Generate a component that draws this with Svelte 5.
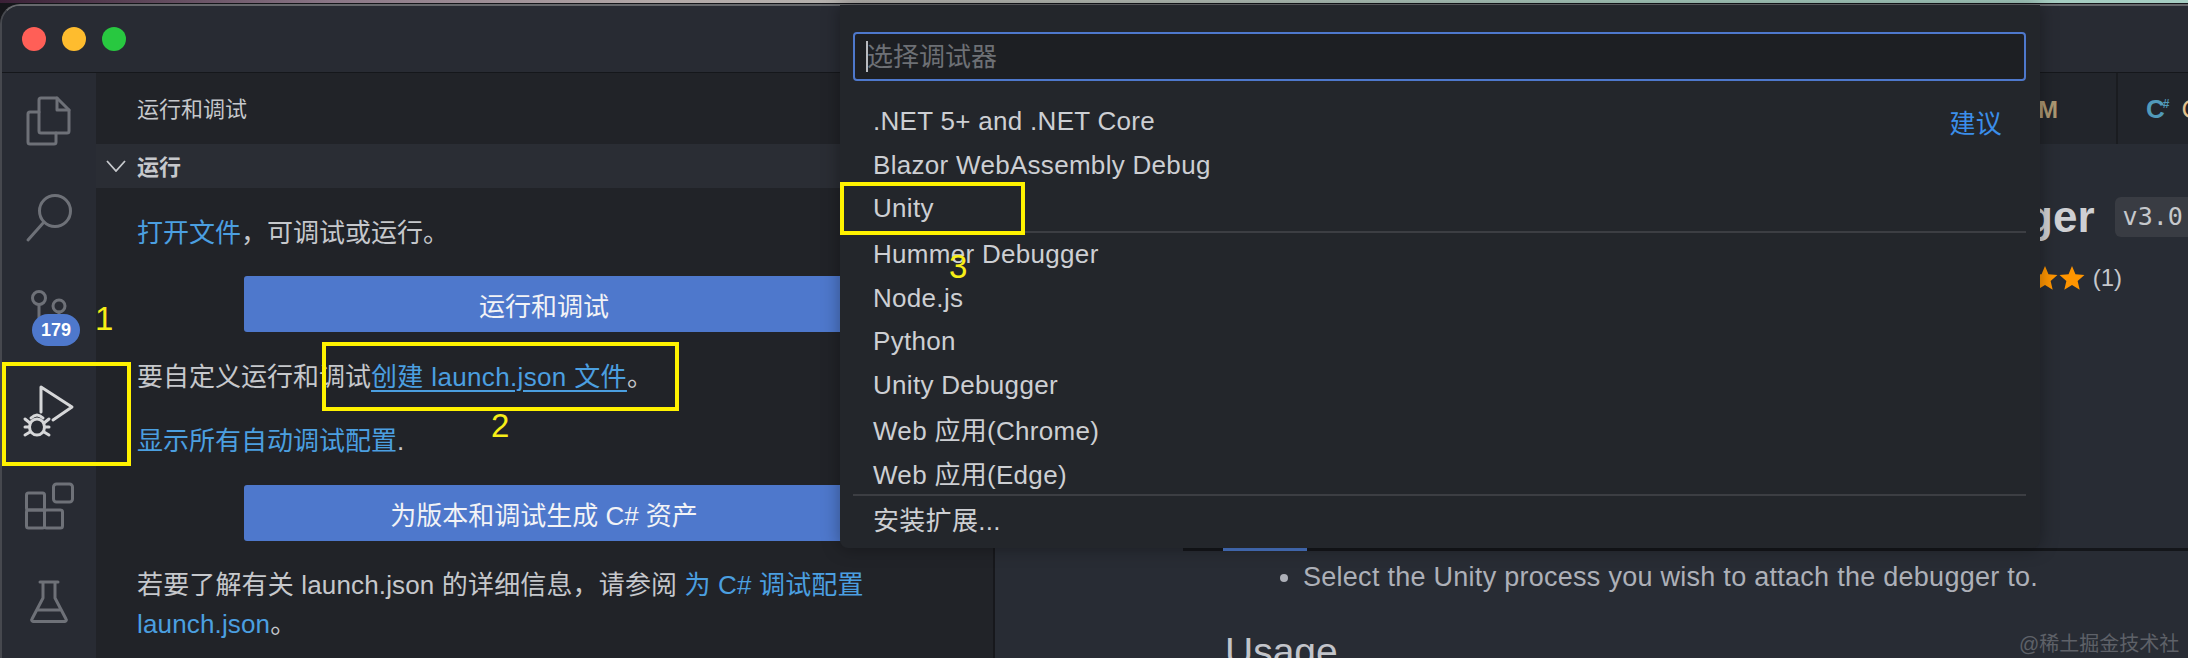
<script lang="ts">
	// Quick pick entries, "sep" marks a divider drawn above the row
	const debuggers = [
		{ label: '.NET 5+ and .NET Core', hint: '建议' },
		{ label: 'Blazor WebAssembly Debug' },
		{ label: 'Unity' },
		{ label: 'Hummer Debugger', sep: true },
		{ label: 'Node.js' },
		{ label: 'Python' },
		{ label: 'Unity Debugger' },
		{ label: 'Web 应用(Chrome)' },
		{ label: 'Web 应用(Edge)' },
		{ label: '安装扩展...', sep: true }
	];

	const stars = [0, 1, 2, 3, 4];
</script>

<div class="screen">
	<div class="desktop-strip"></div>

	<div class="window">
		<header class="titlebar">
			<span class="light red"></span>
			<span class="light yellow"></span>
			<span class="light green"></span>
		</header>

		<div class="workbench">
			<nav class="activity">
				<div class="act-item">
					<svg viewBox="0 0 48 48" class="icon">
						<path d="M14 3a2 2 0 0 1 2-2H32L44 13V34a2 2 0 0 1-2 2H16a2 2 0 0 1-2-2Z" />
						<path d="M32 1V13H44" />
						<path d="M14 15H5a2 2 0 0 0-2 2V45a2 2 0 0 0 2 2H29a2 2 0 0 0 2-2V36" />
					</svg>
				</div>
				<div class="act-item">
					<svg viewBox="0 0 48 48" class="icon">
						<circle cx="30" cy="18" r="15.5" />
						<path d="M19 29 3 47" />
					</svg>
				</div>
				<div class="act-item">
					<svg viewBox="0 0 48 48" class="icon">
						<circle cx="14" cy="9" r="6.5" />
						<circle cx="34" cy="17" r="6" />
						<path d="M14 16V40M34 23V30" />
						<path d="M9 41h30" />
					</svg>
					<span class="badge">179</span>
				</div>
				<div class="act-item">
					<svg viewBox="0 0 48 48" class="icon active">
						<path d="M16 27V2L47 22 28 35" />
						<ellipse cx="12" cy="42" rx="7.5" ry="8" />
						<path d="M6 33q6-6 12 0M0 34l5 4M24 34l-5 4M0 42h4M24 42h-4M0 50l5-3M24 50l-5-3" />
					</svg>
				</div>
				<div class="act-item">
					<svg viewBox="0 0 48 48" class="icon">
						<rect x="1.5" y="12" width="18" height="17" rx="2" />
						<rect x="1.5" y="29" width="18" height="18" rx="2" />
						<rect x="19.5" y="29" width="18" height="18" rx="2" />
						<rect x="28.5" y="3" width="19" height="18" rx="3" />
					</svg>
				</div>
				<div class="act-item">
					<svg viewBox="0 0 48 48" class="icon">
						<path d="M15 5H33M18 5V21L7 42a1.5 1.5 0 0 0 1 2.5H40a1.5 1.5 0 0 0 1-2.5L30 21V5M12 33H36" />
					</svg>
				</div>
			</nav>

			<aside class="sidebar">
				<div class="side-title">运行和调试</div>
				<div class="side-section">
					<svg class="chevron" viewBox="0 0 20 12"><path d="M1 1l9 10 9-10" /></svg>
					<span>运行</span>
				</div>
				<div class="side-body">
					<p><a href="#open">打开文件</a>，可调试或运行。</p>
					<button class="primary first" type="button">运行和调试</button>
					<p>要自定义运行和调试<a class="under" href="#create">创建 launch.json 文件</a>。</p>
					<p><a href="#all">显示所有自动调试配置</a>.</p>
					<button class="primary" type="button">为版本和调试生成 C# 资产</button>
					<p class="spaced">若要了解有关 launch.json 的详细信息，请参阅 <a href="#cfg">为 C# 调试配置 launch.json</a>。</p>
				</div>
			</aside>

			<main class="editor">
				<div class="tabs">
					<div class="tab first"><span class="tab-m">M</span></div>
					<div class="tab"><span class="cs">C<sup>#</sup></span><span class="tab-c">C</span></div>
				</div>
				<section class="ext-head">
					<div class="ext-title">
						<h1>Unity Debugger</h1>
						<span class="version">v3.0.0</span>
					</div>
					<div class="rating">
						{#each stars as s (s)}
							<svg viewBox="0 0 24 24" class="star"><path d="M12 1l3.2 7.6 8.3.7-6.3 5.4 1.9 8.1L12 18.5 4.9 22.8l1.9-8.1L.5 9.3l8.3-.7Z" /></svg>
						{/each}
						<span>(1)</span>
					</div>
				</section>
				<div class="ext-nav"><span class="nav-active"></span></div>
				<section class="ext-body">
					<ul><li>Select the Unity process you wish to attach the debugger to.</li></ul>
					<h2>Usage</h2>
				</section>
			</main>
		</div>
	</div>

	<!-- command palette floats over the workbench -->
	<div class="quickpick">
		<div class="qp-input"><span class="caret"></span>选择调试器</div>
		<ul class="qp-list">
			{#each debuggers as d (d.label)}
				<li class:sep={d.sep}>
					<span>{d.label}</span>
					{#if d.hint}<span class="qp-hint">{d.hint}</span>{/if}
				</li>
			{/each}
		</ul>
	</div>

	<!-- hand-drawn annotations on top of the screenshot -->
	<div class="mark box1"></div>
	<div class="mark box2"></div>
	<div class="mark box3"></div>
	<span class="num n1">1</span>
	<span class="num n2">2</span>
	<span class="num n3">3</span>
	<span class="watermark">@稀土掘金技术社区</span>
</div>

<style>
	:global(body) {
		margin: 0;
		background: #15161a;
	}

	.screen {
		position: relative;
		width: 2188px;
		height: 658px;
		overflow: hidden;
		font-family: "Liberation Sans", "Noto Sans CJK SC", sans-serif;
		font-size: 26px;
		color: #c6c8cc;
		display: flex;
		flex-direction: column;
	}

	.desktop-strip {
		height: 3px;
		flex-shrink: 0;
		background: linear-gradient(90deg, #3a2036 0, #8a7686 15%, #b3a9a8 30%, #b8bdb6 50%, #a9cdc0 75%, #a5cdc2 100%);
	}

	.window {
		flex: 1;
		min-height: 0;
		margin-top: 1px;
		display: flex;
		flex-direction: column;
		border-top: 2px solid #66686c;
		border-left: 2px solid #46484e;
		border-top-left-radius: 20px;
		overflow: hidden;
		background: #282b33;
	}

	/* ── Title bar ── */

	.titlebar {
		height: 66px;
		flex-shrink: 0;
		display: flex;
		align-items: center;
		gap: 16px;
		padding-left: 20px;
		background: #282b33;
		border-bottom: 1px solid #15171b;
		box-sizing: content-box;
	}

	.light {
		width: 24px;
		height: 24px;
		border-radius: 50%;
	}
	.red { background: #ff5f57; }
	.yellow { background: #febc2e; }
	.green { background: #28c840; }

	.workbench {
		flex: 1;
		min-height: 0;
		display: flex;
	}

	/* ── Activity bar ── */

	.activity {
		width: 94px;
		flex-shrink: 0;
		background: #282b33;
	}

	.act-item {
		position: relative;
		height: 96px;
		display: flex;
		align-items: center;
		justify-content: center;
	}

	.icon {
		width: 48px;
		height: 48px;
		overflow: visible;
		fill: none;
		stroke: #6e7178;
		stroke-width: 3;
		stroke-linecap: round;
		stroke-linejoin: round;
	}

	.icon.active {
		stroke: #d6d7d9;
	}

	.badge {
		position: absolute;
		left: 30px;
		top: 49px;
		width: 48px;
		height: 32px;
		border-radius: 16px;
		background: #4e78cc;
		color: #fff;
		font-size: 18px;
		font-weight: 700;
		line-height: 32px;
		text-align: center;
	}

	/* ── Sidebar ── */

	.sidebar {
		width: 899px;
		flex-shrink: 0;
		background: #212328;
		border-right: 2px solid #17181c;
		box-sizing: border-box;
	}

	.side-title {
		height: 71px;
		padding-left: 41px;
		line-height: 73px;
		font-size: 22px;
	}

	.side-section {
		height: 44px;
		display: flex;
		align-items: center;
		background: #2a2d34;
		font-size: 22px;
		font-weight: 700;
	}

	.side-section span {
		margin-top: -2px;
	}

	.chevron {
		width: 20px;
		height: 12px;
		margin-left: 10px;
		margin-right: 11px;
		fill: none;
		stroke: #c6c8cc;
		stroke-width: 1.8;
	}

	.side-body {
		display: flex;
		flex-direction: column;
		gap: 24.6px;
		padding: 26px 42px 0 41px;
	}

	.side-body p {
		margin: 0;
		line-height: 39px;
	}

	.side-body p.spaced {
		letter-spacing: 0.15px;
	}

	a {
		color: #4b9fe0;
		text-decoration: none;
	}

	a.under {
		text-decoration: underline;
		text-underline-offset: 4px;
		text-decoration-thickness: 2px;
		letter-spacing: 0.35px;
	}

	.primary {
		display: block;
		width: 600px;
		height: 56px;
		margin: 0 auto;
		border: 0;
		border-radius: 3px;
		background: #4e78cc;
		color: #f2f3f6;
		font: inherit;
	}

	.primary.first {
		margin-top: -1.5px;
		margin-bottom: 1.5px;
	}

	/* ── Editor ── */

	.editor {
		flex: 1;
		min-width: 0;
		background: #282c34;
		overflow: hidden;
		display: flex;
		flex-direction: column;
	}

	.tabs {
		height: 71px;
		flex-shrink: 0;
		display: flex;
		justify-content: flex-end;
		background: #22252b;
	}

	.tab {
		display: flex;
		align-items: center;
		border-left: 2px solid #1a1c20;
		width: 72px;
		padding: 2px 0 0 28px;
		box-sizing: border-box;
		gap: 14px;
		white-space: nowrap;
		overflow: hidden;
	}

	.tab.first {
		border-left: 0;
		width: 80px;
		padding-left: 2px;
	}

	.tab-m {
		color: #ac9772;
		font-size: 24px;
		font-weight: 700;
	}

	.cs {
		color: #519aba;
		font-weight: 700;
		font-size: 26px;
		letter-spacing: -2px;
	}

	.cs sup {
		font-size: 12px;
		vertical-align: 10px;
		line-height: 0;
	}

	.tab-c {
		color: #e2c08d;
	}

	.ext-head {
		height: 404px;
		flex-shrink: 0;
		padding-left: 600px;
		overflow: hidden;
		box-sizing: border-box;
	}

	.ext-title {
		display: flex;
		align-items: center;
		gap: 20px;
		margin-top: 53px;
		margin-left: 172px;
		height: 40px;
		white-space: nowrap;
	}

	h1 {
		margin: 0;
		font-size: 44px;
		font-weight: 700;
		color: #cfd0d3;
	}

	.version {
		padding: 0 8px;
		height: 40px;
		line-height: 40px;
		border-radius: 6px;
		background: #393c43;
		font-family: "DejaVu Sans Mono", monospace;
		font-size: 25px;
		color: #c6c8cc;
	}

	.rating {
		display: flex;
		align-items: center;
		justify-content: flex-end;
		gap: 1px;
		width: 527px;
		margin-top: 26px;
		height: 30px;
		font-size: 24px;
	}

	.rating span {
		margin-left: 7px;
	}

	.star {
		width: 26px;
		height: 26px;
		fill: #ff9500;
	}

	.ext-nav {
		height: 3px;
		flex-shrink: 0;
		margin-left: 188px;
		background: #14161a;
	}

	.nav-active {
		display: block;
		width: 84px;
		height: 3px;
		margin-left: 40px;
		background: #4a76c6;
	}

	.ext-body {
		padding-left: 230px;
		color: #adb0b8;
	}

	.ext-body ul {
		margin: 11px 0 0;
		padding-left: 78px;
		line-height: 30px;
		font-size: 27px;
		letter-spacing: 0.27px;
		white-space: nowrap;
	}

	h2 {
		margin: 38px 0 0;
		font-size: 39px;
		font-weight: 400;
		color: #c2c4ca;
	}

	/* ── Quick pick ── */

	.quickpick {
		position: absolute;
		left: 840px;
		top: 5px;
		width: 1200px;
		height: 543px;
		box-sizing: border-box;
		padding: 27px 14px 0 13px;
		background: #23262b;
		border-radius: 0 0 8px 8px;
		box-shadow: 0 0 18px rgba(0, 0, 0, 0.35);
	}

	.qp-input {
		position: relative;
		height: 49px;
		box-sizing: border-box;
		padding-left: 12px;
		border: 2px solid #4e78cc;
		border-radius: 4px;
		background: #1d1f23;
		color: #6d7075;
		font-size: 26px;
		line-height: 47px;
	}

	.caret {
		position: absolute;
		left: 11px;
		top: 7px;
		width: 2px;
		height: 31px;
		background: #b9bbc0;
	}

	.qp-list {
		list-style: none;
		margin: 19px 0 0;
		padding: 0;
	}

	.qp-list li {
		display: flex;
		justify-content: space-between;
		height: 43.6px;
		padding: 0 24px 0 20px;
		align-items: center;
		color: #cdcfd3;
		font-size: 26px;
		letter-spacing: 0.3px;
		white-space: nowrap;
	}

	.qp-list li.sep {
		border-top: 2px solid #3c3e43;
	}

	.qp-hint {
		color: #3b8eea;
		font-size: 26px;
	}

	/* ── Annotations ── */

	.mark {
		position: absolute;
		box-sizing: border-box;
		border: 4px solid #fff200;
	}

	.box1 { left: 2px; top: 362px; width: 129px; height: 104px; }
	.box2 { left: 322px; top: 342px; width: 357px; height: 69px; }
	.box3 { left: 840px; top: 182px; width: 185px; height: 53px; }

	.num {
		position: absolute;
		color: #f7ee17;
		font-size: 33px;
		line-height: 33px;
	}

	.n1 { left: 95px; top: 302px; }
	.n2 { left: 491px; top: 409px; }
	.n3 { left: 949px; top: 250px; }

	.watermark {
		position: absolute;
		left: 2019px;
		top: 628px;
		font-size: 20px;
		color: #5e6168;
	}
</style>
